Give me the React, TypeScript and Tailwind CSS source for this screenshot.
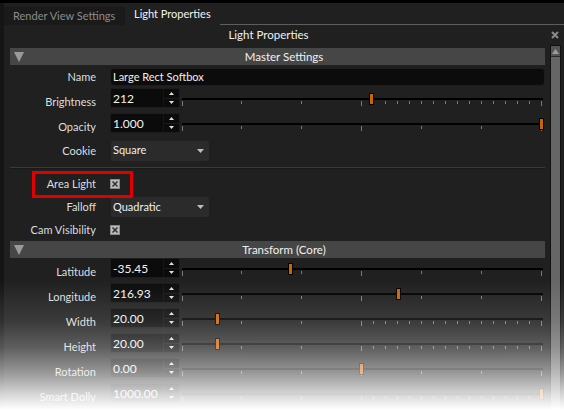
import React from "react";

const font = { fontFamily: 'Lato, "Liberation Sans", Arial, sans-serif' };

const Slider = ({ thumb, dense }: { thumb: number; dense?: boolean }) => {
  const ticks: { x: number; major: boolean }[] = [
    { x: 0, major: true },
    { x: 59, major: false },
    { x: 119, major: false },
    { x: 179, major: true },
    { x: 239, major: false },
    { x: 299, major: false },
    { x: 359, major: true },
  ];
  if (dense) {
    for (let k = 1; k < 15; k++) {
      if (179 + k * 12 !== 239 && 179 + k * 12 !== 299) ticks.push({ x: 179 + k * 12, major: false });
    }
  }
  return (
    <svg width="363" height="20" className="block shrink-0">
      <rect x="0" y="10" width="361" height="2" fill="#000" />
      {ticks.map((t) => (
        <rect key={t.x} x={t.x} y="13" width="1" height={t.major ? 5 : 3} fill="#7a7a7a" />
      ))}
      <rect x={thumb} y="5" width="5" height="12" fill="#000" />
      <rect x={thumb + 1} y="6" width="3" height="10" fill="#cc6406" />
    </svg>
  );
};

const SpinBox = ({ value }: { value: string }) => (
  <div className="flex h-[20px] w-[70px] shrink-0 border border-[#1c1c1c] bg-[#0b0b0b]">
    <div className="flex-1 pl-[2px] pt-[3px] text-[12px] leading-[14px] text-[#f2f2f2]">{value}</div>
    <div className="flex w-[16px] flex-col border-l border-[#161616]">
      <div className="flex flex-1 items-center justify-center border-b border-[#1a1a1a]">
        <svg width="5" height="3"><polygon points="2.5,0 5,3 0,3" fill="#e0e0e0" /></svg>
      </div>
      <div className="flex flex-1 items-center justify-center">
        <svg width="5" height="3"><polygon points="0,0 5,0 2.5,3" fill="#e0e0e0" /></svg>
      </div>
    </div>
  </div>
);

const Label = ({ children, spin }: { children: React.ReactNode; spin?: boolean }) => (
  <div
    className={`w-[86px] shrink-0 whitespace-nowrap text-right text-[11px] leading-[14px] text-[#dedede] ${spin ? "self-start pt-[7px]" : ""}`}
  >
    {children}
  </div>
);

const SpinRow = ({ label, value, thumb, dense }: { label: string; value: string; thumb: number; dense?: boolean }) => (
  <div className="flex h-[25px] items-start pl-[6px]">
    <Label spin>{label}</Label>
    <div className="ml-[14px] flex items-start gap-[2px]">
      <SpinBox value={value} />
      <Slider thumb={thumb} dense={dense} />
    </div>
  </div>
);

const Dropdown = ({ value }: { value: string }) => (
  <div className="ml-[15px] flex h-[20px] w-[98px] items-center justify-between rounded-[3px] bg-[#2b2b2b] pl-[2px] pr-[5px] text-[11px] text-[#f0f0f0]">
    <span>{value}</span>
    <svg width="7" height="4"><polygon points="0,0 7,0 3.5,4" fill="#bdbdbd" /></svg>
  </div>
);

const Check = () => (
  <svg width="10" height="10" className="ml-[14px] block">
    <rect x="0" y="0" width="10" height="10" fill="#bcbcbc" />
    <rect x="0.5" y="0.5" width="9" height="9" fill="none" stroke="#8a8a8a" />
    <path d="M2.5 2.5 L7.5 7.5 M7.5 2.5 L2.5 7.5" stroke="#333" strokeWidth="1.6" />
  </svg>
);

const SectionHeader = ({ title }: { title: string }) => (
  <div className="relative ml-[6px] mr-[5px] flex h-[17px] items-center bg-[#464646]">
    <svg width="10" height="10" className="absolute left-[4px] top-[4px]">
      <polygon points="0,0 10,0 5,10" fill="#9a9a9a" />
    </svg>
    <div className="flex-1 pl-[13px] text-center text-[11.5px] text-[#f0f0f0]">{title}</div>
  </div>
);

export default function App() {
  return (
    <div
      className="relative h-[415px] w-[564px] overflow-hidden border-t-[3px] border-black bg-[#151515] pl-[4px]"
      style={font}
    >
      <div className="flex h-full flex-col bg-[#202020]">
        {/* tabs */}
        <div className="flex h-[22px] items-end">
          <div className="flex h-[18px] w-[121px] items-center whitespace-nowrap bg-[#1a1a1a] pl-[9px] text-[11px] text-[#8c8c8c]">
            Render View Settings
          </div>
          <div className="flex h-[22px] w-[95px] items-center whitespace-nowrap pl-[9px] pt-[1px] text-[11px] text-[#f2f2f2]">
            Light Properties
          </div>
          <div className="h-full flex-1 border-b border-[#5e5e5e]" />
        </div>

        {/* title */}
        <div className="flex h-[20px] items-center">
          <div className="flex-1 pr-[18px] text-center text-[11.5px] text-[#f0f0f0]">Light Properties</div>
          <svg width="8" height="8" className="mr-[5px]">
            <path d="M1 1 L7 7 M7 1 L1 7" stroke="#8a8a8a" strokeWidth="2" />
          </svg>
        </div>

        <div className="flex flex-1">
          <div className="flex-1 pt-[3px]">
            <SectionHeader title="Master Settings" />

            <div className="mt-[3px] flex h-[18px] items-center pl-[6px] pr-[5px]">
              <Label>Name</Label>
              <div className="ml-[14px] flex h-[18px] flex-1 items-center rounded-[4px] border border-[#1d1d1d] bg-[#0c0c0c] pl-[2px] pt-[1px] text-[11px] text-[#f0f0f0]">
                Large Rect Softbox
              </div>
            </div>

            <div className="mt-[2px]">
              <SpinRow label="Brightness" value="212" thumb={187} dense />
              <SpinRow label="Opacity" value="1.000" thumb={357} />
            </div>

            <div className="flex h-[25px] items-center pl-[6px]">
              <Label>Cookie</Label>
              <Dropdown value="Square" />
            </div>

            <div className="ml-[6px] mr-[5px] mt-[4px] h-[2px] border-t border-[#3a3a3a] bg-[#191919]" />

            <div className="mt-[3px] flex h-[24px] items-center pl-[6px]">
              <Label>Area Light</Label>
              <Check />
            </div>
            <div className="flex h-[22px] items-center pl-[6px]">
              <Label>Falloff</Label>
              <Dropdown value="Quadratic" />
            </div>
            <div className="flex h-[23px] items-center pl-[6px]">
              <Label>Cam Visibility</Label>
              <Check />
            </div>

            <SectionHeader title="Transform (Core)" />

            <div>
              <SpinRow label="Latitude" value="-35.45" thumb={106} />
              <SpinRow label="Longitude" value="216.93" thumb={214} />
              <SpinRow label="Width" value="20.00" thumb={33} dense />
              <SpinRow label="Height" value="20.00" thumb={33} dense />
              <SpinRow label="Rotation" value="0.00" thumb={177} />
              <SpinRow label="Smart Dolly" value="1000.00" thumb={357} dense />
            </div>
          </div>

          {/* scrollbar */}
          <div className="w-[14px] pr-[3px]">
            <div className="flex h-full w-[11px] flex-col border border-[#111] bg-[#666]">
              <div className="flex h-[11px] items-center justify-center border-b border-[#2a2a2a] bg-[#555]">
                <svg width="7" height="5"><polygon points="3.5,0 7,5 0,5" fill="#9c9c9c" /></svg>
              </div>
            </div>
          </div>
        </div>
      </div>

      {/* annotation */}
      <div className="absolute left-[32px] top-[168px] h-[27px] w-[101px] border-[3px] border-[#e00000]" />

      {/* fade */}
      <div className="pointer-events-none absolute bottom-0 left-0 h-[135px] w-full bg-[linear-gradient(to_bottom,rgba(255,255,255,0)_0%,rgba(255,255,255,0.12)_31%,rgba(255,255,255,0.28)_50%,rgba(255,255,255,0.53)_68%,rgba(255,255,255,0.84)_86%,#fff_96%)]" />
    </div>
  );
}
